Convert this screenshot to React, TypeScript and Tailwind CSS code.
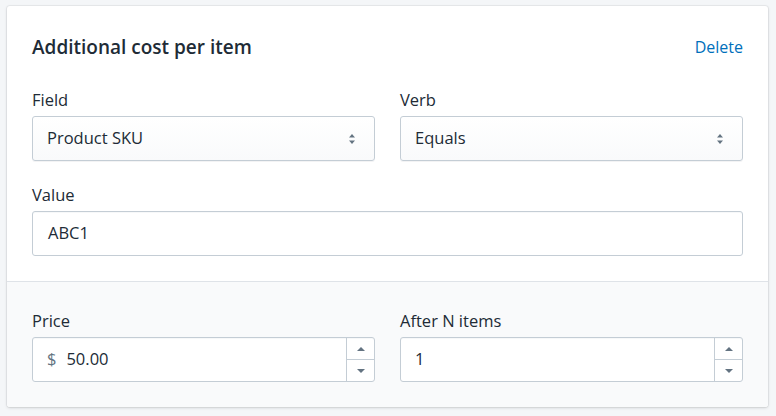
export default function App() {
  return (
    <div
      className="min-h-screen bg-[#f4f6f8] pt-[6px] pl-[7px]"
      style={{ fontFamily: '"Open Sans", "Noto Sans", sans-serif' }}
    >
      <div className="w-[761px] rounded-[3px] bg-white shadow-[0_0_0_1px_rgba(63,63,68,0.06),0_1px_3px_0_rgba(63,63,68,0.18)] overflow-hidden">
        <div className="px-[25px] pt-[29px] pb-[25px] border-b border-[#dfe3e8]">
          <div className="flex items-center justify-between h-6">
            <h2 className="text-[19px] font-semibold text-[#212b36] leading-6">
              Additional cost per item
            </h2>
            <a className="text-[16px] text-[#006fbb] leading-6">Delete</a>
          </div>

          <div className="grid grid-cols-2 gap-x-[25px] mt-[31px]">
            <SelectField label="Field" value="Product SKU" />
            <SelectField label="Verb" value="Equals" />
          </div>

          <div className="mt-[24px]">
            <Label text="Value" />
            <div className="h-[45px] rounded-[3px] border border-[#c4cdd5] bg-white flex items-center pl-[15px] text-[16.5px] text-[#212b36] shadow-[inset_0_1px_0_0_rgba(99,115,129,0.05)]">
              ABC1
            </div>
          </div>
        </div>

        <div className="bg-[#f9fafb] px-[25px] pt-[29px] pb-[25px]">
          <div className="grid grid-cols-2 gap-x-[25px]">
            <NumberField label="Price" prefix="$" value="50.00" />
            <NumberField label="After N items" value="1" />
          </div>
        </div>
      </div>
    </div>
  );
}

function Label({ text }: { text: string }) {
  return <div className="text-[16.5px] leading-5 text-[#212b36] mb-[6px]">{text}</div>;
}

function SelectField({ label, value }: { label: string; value: string }) {
  return (
    <div>
      <Label text={label} />
      <div className="h-[45px] rounded-[3px] border border-[#c4cdd5] bg-gradient-to-b from-white to-[#f9fafb] flex items-center justify-between pl-[14px] pr-[18px] text-[16.5px] text-[#212b36] shadow-[0_1px_0_0_rgba(22,29,37,0.05)]">
        <span>{value}</span>
        <svg width="8" height="12" viewBox="0 0 8 12" className="text-[#637381]">
          <path d="M4 1 L7 4.5 H1 Z" fill="currentColor" />
          <path d="M4 11 L7 7.5 H1 Z" fill="currentColor" />
        </svg>
      </div>
    </div>
  );
}

function NumberField({ label, prefix, value }: { label: string; prefix?: string; value: string }) {
  return (
    <div>
      <Label text={label} />
      <div className="h-[45px] rounded-[3px] border border-[#c4cdd5] bg-white flex text-[16.5px] text-[#212b36] shadow-[inset_0_1px_0_0_rgba(99,115,129,0.05)]">
        <div className="flex-1 flex items-center pl-[14px]">
          {prefix && <span className="text-[#637381] mr-[10px]">{prefix}</span>}
          <span>{value}</span>
        </div>
        <div className="w-[28px] border-l border-[#c4cdd5] flex flex-col">
          <div className="flex-1 flex items-center justify-center border-b border-[#c4cdd5]">
            <svg width="8" height="4" viewBox="0 0 8 4" className="text-[#637381]">
              <path d="M4 0 L8 4 H0 Z" fill="currentColor" />
            </svg>
          </div>
          <div className="flex-1 flex items-center justify-center">
            <svg width="8" height="4" viewBox="0 0 8 4" className="text-[#637381]">
              <path d="M4 4 L8 0 H0 Z" fill="currentColor" />
            </svg>
          </div>
        </div>
      </div>
    </div>
  );
}
